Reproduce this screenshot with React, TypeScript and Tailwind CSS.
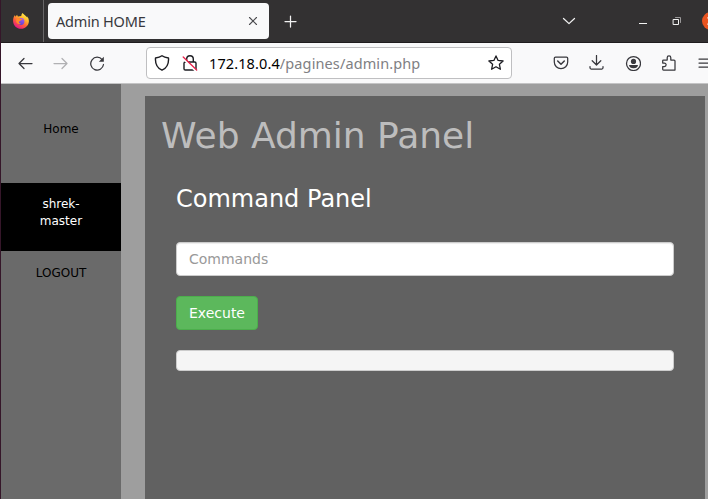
import type { ReactNode } from "react";

function Glyph({ children, className = "" }: { children: ReactNode; className?: string }) {
  return (
    <svg
      viewBox="0 0 16 16"
      className={`block size-4 shrink-0 ${className}`}
      fill="none"
      stroke="currentColor"
      strokeWidth="1.25"
      strokeLinecap="round"
      strokeLinejoin="round"
    >
      {children}
    </svg>
  );
}

function FirefoxLogo() {
  return (
    <svg viewBox="0 0 16 16" className="block size-4">
      <defs>
        <linearGradient id="flame" x1="0.8" y1="0.05" x2="0.25" y2="0.95">
          <stop offset="0" stopColor="#fff44f" />
          <stop offset="0.35" stopColor="#ffb02a" />
          <stop offset="0.65" stopColor="#ff5a3c" />
          <stop offset="1" stopColor="#e31587" />
        </linearGradient>
        <linearGradient id="globe" x1="0.7" y1="0" x2="0.3" y2="1">
          <stop offset="0" stopColor="#a45cf0" />
          <stop offset="1" stopColor="#5b3fd0" />
        </linearGradient>
      </defs>
      <path
        d="M9.6 0c-.9.8-1.400 2-1.300 3C6.900 3 5.700 3.200 5 3.600 4.400 3 4.200 2.400 4.300 1.700 3.300 2.300 2.800 3 2.500 3.700 2.100 3.200 2 2.700 2 2.100 .6 3.700 0 6 .1 8.200.3 12.500 3.700 15.800 8 15.800s7.800-3.400 7.900-7.600c0-2-.8-3.900-1.900-4.900.2.600.3 1 .3 1.500C13.500 3.200 12.400 2.900 11.600 2 10.800 1.200 10 .8 9.600 0z"
        fill="url(#flame)"
      />
      <circle cx="8" cy="8.500" r="3.400" fill="url(#globe)" />
      <path d="M3.600 5.400c1.500-.7 3-.5 3.900.6h2c-.2 1-1.300 1.200-2 1.500-.5.800-.8 1.100-1.700 1.100 0 1.500 1.200 2.300 2.600 2.200-2.500 1.300-5.300-.4-5.300-3z" fill="#ff8a2b" />
    </svg>
  );
}

function TabStrip() {
  return (
    <div className="flex h-[43px] shrink-0 border-b border-[#1f1c1e] bg-[#333132] text-[#f2f2f2]">
      <div className="flex w-[43px] shrink-0 justify-center border-r border-[#686667] pr-[2px] pt-[13px]">
        <FirefoxLogo />
      </div>
      <div className="ml-1 mt-[3px] flex h-9 w-[221px] shrink-0 items-center justify-between rounded bg-[#f9f9fa] pl-2 pr-[8px] text-[#38383d]">
        <span className="pt-[2px] font-['Noto_Sans',sans-serif] text-[14.500px] tracking-[-0.200px]">Admin HOME</span>
        <Glyph className="text-[#4c4c50]">
          <path d="M4.500 4.500l7 7M11.500 4.500l-7 7" strokeWidth="1.100" />
        </Glyph>
      </div>
      <div className="flex grow pt-[13px]">
        <Glyph className="ml-[13px]">
          <path d="M8.500 3v11M3 8.500h11" />
        </Glyph>
        <Glyph className="ml-[263px]">
          <path d="M2.500 5.500L8 10.600l5.500-5.100" />
        </Glyph>
        <Glyph className="ml-[58px]">
          <path d="M4 10.500h8" strokeLinecap="butt" strokeWidth="1" />
        </Glyph>
        <Glyph className="ml-[18px]">
          <path d="M4.500 6.500h5v5h-5z" strokeLinejoin="miter" strokeWidth="1" />
          <path d="M6.500 4.500h5v5" stroke="#9b999a" strokeWidth="1" strokeLinejoin="miter" />
        </Glyph>
      </div>
      <div className="w-[6px] shrink-0 overflow-hidden pt-[12px]">
        <svg viewBox="0 0 18 18" className="block size-[18px]">
          <circle cx="9" cy="9" r="9" fill="#e95420" />
          <path d="M5.500 5.500l7 7m0-7l-7 7" stroke="white" strokeWidth="1.200" />
        </svg>
      </div>
    </div>
  );
}

function Toolbar() {
  return (
    <div className="flex h-[41px] shrink-0 items-center overflow-hidden border-b border-[#c4c4c5] bg-[#f9f9fa] text-[#38383d]">
      <Glyph className="ml-4">
        <path d="M15 8.500H2M7 3.500L2 8.500l5 5" />
      </Glyph>
      <Glyph className="ml-5 text-[#b1b1b3]">
        <path d="M1 8.500h13M9 3.500l5 5-5 5" />
      </Glyph>
      <Glyph className="ml-5">
        <path d="M13.200 4.700A6.400 6.400 0 1 0 14.500 9.500" />
        <path d="M14.800 1.800v5H9.800z" fill="currentColor" stroke="none" />
      </Glyph>
      <div className="ml-[41px] flex h-8 w-[366px] shrink-0 items-center rounded border border-[#bfbfc1] bg-white text-[#1d1d22]">
        <Glyph className="ml-[7px]">
          <path d="M8 .8C6.200 2.200 3.700 2.800 1.500 3c-.4 5.500 1.600 10 6.500 12.200 4.900-2.200 6.900-6.700 6.500-12.200C12.300 2.800 9.800 2.200 8 .8z" strokeWidth="1.400" />
        </Glyph>
        <Glyph className="ml-[12px]">
          <path d="M4.700 7V4a3.300 3.300 0 0 1 6.600 0v3M3.300 7h9.400q1.300 0 1.300 1.300v5.400q0 1.300-1.300 1.300H3.300Q2 15 2 13.700V8.300Q2 7 3.300 7z" strokeWidth="1.400" />
          <path d="M.8 3.300l12.300 12" stroke="white" strokeWidth="2" />
          <path d="M1.200 2l13.500 13" stroke="#e9224b" strokeWidth="1.300" />
        </Glyph>
        <span className="ml-[11px] pt-[2px] font-['Noto_Sans',sans-serif] text-[14.500px] tracking-[0.110px] text-[#808083]">
          <span className="text-black">172.18.0.4</span>/pagines/admin.php
        </span>
        <Glyph className="ml-auto mr-[7px]">
          <path d="M8 .9l2.100 4.500 5 .6-3.700 3.300 1 5L8 11.800l-4.400 2.500 1-5L.9 6l5-.6z" strokeWidth="1.300" />
        </Glyph>
      </div>
      <Glyph className="ml-[41px]">
        <path d="M2.500 2h11q1.200 0 1.200 1.200V7A6.700 6.700 0 0 1 1.300 7V3.200Q1.300 2 2.500 2z" />
        <path d="M4.700 6L8 9.200 11.300 6" strokeWidth="1.500" />
      </Glyph>
      <Glyph className="ml-5">
        <path d="M7.500.5v9.300M3.200 5.700L7.500 10l4.300-4.300M1 11.500v1.300Q1 14 2.200 14h10.600q1.200 0 1.200-1.200v-1.300" />
      </Glyph>
      <Glyph className="ml-5">
        <circle cx="8.500" cy="8.500" r="7" />
        <circle cx="8.500" cy="6.400" r="2.600" fill="currentColor" stroke="none" />
        <path d="M4 10h9q-.5 3.200-4.500 3.200T4 10z" fill="currentColor" stroke="none" />
      </Glyph>
      <Glyph className="ml-5">
        <path d="M2.500 5h3.700V2.700a1.800 1.800 0 0 1 3.600 0V5h3.200q1 0 1 1v9H2.500q-.8 0-.8-.8v-2.700h1.700a1.700 1.700 0 0 0 0-3.400H1.700V5.800Q1.700 5 2.500 5z" />
      </Glyph>
      <Glyph className="ml-[21px]">
        <path d="M1 4h13M1 8h13M1 12h13" />
      </Glyph>
    </div>
  );
}

function Sidebar() {
  return (
    <nav className="flex w-[120px] shrink-0 flex-col bg-[#6a6a6a] pt-[37px] text-center text-xs leading-[17px] text-black">
      <a className="h-[62px]">Home</a>
      <a className="flex h-[68px] items-start justify-center bg-black px-8 pt-[13px] text-white">shrek-<br />master</a>
      <a className="pt-[14px]">LOGOUT</a>
    </nav>
  );
}

export default function App() {
  return (
    <div className="flex h-[499px] w-[708px] flex-col overflow-hidden border-l border-[#351629] font-['DejaVu_Sans',sans-serif]">
      <TabStrip />
      <Toolbar />
      <div className="flex min-h-0 grow bg-[#9e9e9e]">
        <Sidebar />
        <main className="ml-6 mt-3 w-[560px] shrink-0 bg-[#616161] px-4 pt-5">
          <h1 className="text-[36px] leading-10 text-[#bdbdbd]">Web Admin Panel</h1>
          <div className="mx-[15px] mt-[30px] text-sm leading-5">
            <h3 className="text-2xl leading-[26px] text-white">Command Panel</h3>
            <input
              placeholder="Commands"
              className="mt-[30px] block h-[34px] w-full rounded border border-[#ccc] bg-white px-3 shadow-[inset_0_1px_1px_rgba(0,0,0,0.075)] placeholder:text-[#999]"
            />
            <button className="mt-5 block h-[34px] rounded border border-[#4cae4c] bg-[#5cb85c] px-3 text-white">Execute</button>
            <pre className="mt-5 h-[21px] rounded border border-[#ccc] bg-[#f5f5f5]" />
          </div>
        </main>
      </div>
    </div>
  );
}
